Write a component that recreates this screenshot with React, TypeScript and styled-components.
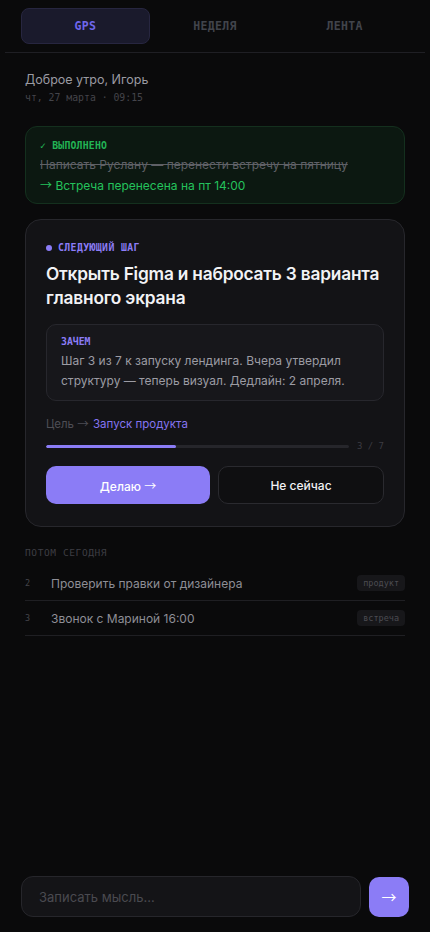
import styled, { createGlobalStyle } from "styled-components";
import { useState } from "react";

const GlobalStyle = createGlobalStyle`
  html, body {
    margin: 0;
    padding: 0;
    background: #0a0a0b;
  }
  * { box-sizing: border-box; }
`;

const tabs = ["GPS", "НЕДЕЛЯ", "ЛЕНТА"];

const later = [
  { n: 2, text: "Проверить правки от дизайнера", tag: "продукт" },
  { n: 3, text: "Звонок с Мариной 16:00", tag: "встреча" },
];

const App: React.FC = () => {
  const [active, setActive] = useState(0);
  const done = 3;
  const total = 7;

  return (
    <Page>
      <GlobalStyle />
      <Header>
        {tabs.map((t, i) => (
          <Tab key={t} $active={i === active} onClick={() => setActive(i)}>
            {t}
          </Tab>
        ))}
      </Header>

      <Content>
        <Greeting>
          <Hello>Доброе утро, Игорь</Hello>
          <DateLine>чт, 27 марта · 09:15</DateLine>
        </Greeting>

        <DoneCard>
          <DoneLabel>✓ ВЫПОЛНЕНО</DoneLabel>
          <DoneTask>Написать Руслану — перенести встречу на пятницу</DoneTask>
          <DoneResult>
            <Arrow>→</Arrow> Встреча перенесена на пт 14:00
          </DoneResult>
        </DoneCard>

        <StepCard>
          <StepLabel>
            <Dot />
            СЛЕДУЮЩИЙ ШАГ
          </StepLabel>
          <StepTitle>Открыть Figma и набросать 3 варианта главного экрана</StepTitle>
          <WhyBox>
            <WhyLabel>ЗАЧЕМ</WhyLabel>
            <WhyText>
              Шаг 3 из 7 к запуску лендинга. Вчера утвердил структуру — теперь
              визуал. Дедлайн: 2 апреля.
            </WhyText>
          </WhyBox>
          <Goal>
            Цель <Arrow>→</Arrow> <GoalLink>Запуск продукта</GoalLink>
          </Goal>
          <ProgressRow>
            <Track>
              <Fill style={{ width: `${(done / total) * 100}%` }} />
            </Track>
            <Count>
              {done} / {total}
            </Count>
          </ProgressRow>
          <Buttons>
            <PrimaryButton>
              Делаю <Arrow>→</Arrow>
            </PrimaryButton>
            <GhostButton>Не сейчас</GhostButton>
          </Buttons>
        </StepCard>

        <Section>
          <SectionTitle>ПОТОМ СЕГОДНЯ</SectionTitle>
          <List>
            {later.map((item) => (
              <Row key={item.n}>
                <Num>{item.n}</Num>
                <RowText>{item.text}</RowText>
                <Tag>{item.tag}</Tag>
              </Row>
            ))}
          </List>
        </Section>
      </Content>

      <Composer>
        <Input placeholder="Записать мысль..." />
        <SendButton>
          <Arrow>→</Arrow>
        </SendButton>
      </Composer>
    </Page>
  );
};

const Page = styled.div`
  display: flex;
  flex-direction: column;
  min-height: 100vh;
  background: #0a0a0b;
  font-family: Inter, "Noto Sans", sans-serif;
`;

const Arrow = styled.span`
  font-family: "Noto Sans CJK SC", sans-serif;
  font-weight: 400;
`;

const Header = styled.div`
  display: flex;
  gap: 1px;
  margin: 0 5px;
  padding: 8px 16px 8px;
  border-bottom: 1px solid #1f1f24;
`;

const Tab = styled.button<{ $active: boolean }>`
  flex: 1;
  height: 36px;
  border-radius: 8px;
  border: 1px solid ${(p) => (p.$active ? "#272640" : "transparent")};
  background: ${(p) => (p.$active ? "#1a1a2c" : "transparent")};
  color: ${(p) => (p.$active ? "#6f66ec" : "#41444b")};
  font-family: "DejaVu Sans Mono", monospace;
  font-size: 11.5px;
  font-weight: 700;
  letter-spacing: 0.3px;
  cursor: pointer;
`;

const Content = styled.div`
  display: flex;
  flex-direction: column;
  padding: 18px 25px 0;
`;

const Greeting = styled.div`
  display: flex;
  flex-direction: column;
  gap: 2px;
  margin-bottom: 22px;
`;

const Hello = styled.div`
  color: #9a9aa2;
  font-size: 12.5px;
  line-height: 18px;
`;

const DateLine = styled.div`
  color: #44444a;
  font-family: "DejaVu Sans Mono", monospace;
  font-size: 9.8px;
  line-height: 13px;
`;

const DoneCard = styled.div`
  display: flex;
  flex-direction: column;
  gap: 3px;
  padding: 12px 14px 9px;
  border-radius: 12px;
  border: 1px solid #14301e;
  background: #0c1811;
  margin-bottom: 15px;
`;

const DoneLabel = styled.div`
  color: #22b455;
  font-family: "DejaVu Sans Mono", monospace;
  font-size: 9.8px;
  font-weight: 700;
  letter-spacing: 0.2px;
  line-height: 14px;
`;

const DoneTask = styled.div`
  color: #5f6066;
  font-size: 12px;
  line-height: 17px;
  text-decoration: line-through;
`;

const DoneResult = styled.div`
  color: #24c25c;
  font-size: 12px;
  line-height: 17px;
`;

const StepCard = styled.div`
  display: flex;
  flex-direction: column;
  padding: 22px 20px 22px;
  border-radius: 16px;
  border: 1px solid #27272c;
  background: #131316;
`;

const StepLabel = styled.div`
  display: flex;
  align-items: center;
  gap: 6px;
  color: #8b7cf6;
  font-family: "DejaVu Sans Mono", monospace;
  font-size: 9.8px;
  font-weight: 700;
  letter-spacing: 0.4px;
  line-height: 12px;
`;

const Dot = styled.span`
  width: 6px;
  height: 6px;
  border-radius: 50%;
  background: #8b7cf6;
`;

const StepTitle = styled.div`
  margin-top: 8px;
  color: #f2f2f5;
  font-size: 17.3px;
  font-weight: 600;
  line-height: 24px;
  letter-spacing: -0.2px;
`;

const WhyBox = styled.div`
  display: flex;
  flex-direction: column;
  gap: 3px;
  margin-top: 14px;
  padding: 11px 14px 9px;
  border-radius: 10px;
  border: 1px solid #27272d;
  background: #17171b;
`;

const WhyLabel = styled.div`
  color: #8b7cf6;
  font-family: "DejaVu Sans Mono", monospace;
  font-size: 9.8px;
  font-weight: 700;
  line-height: 12px;
`;

const WhyText = styled.div`
  color: #9c9ca4;
  font-size: 12px;
  line-height: 20px;
`;

const Goal = styled.div`
  margin-top: 14px;
  color: #4e4e55;
  font-size: 11.5px;
  line-height: 16px;
`;

const GoalLink = styled.span`
  margin-left: 1px;
  color: #8474f0;
`;

const ProgressRow = styled.div`
  display: flex;
  align-items: center;
  gap: 8px;
  margin-top: 9px;
`;

const Track = styled.div`
  flex: 1;
  height: 3px;
  border-radius: 2px;
  background: #26262b;
  overflow: hidden;
`;

const Fill = styled.div`
  height: 100%;
  border-radius: 2px;
  background: #8b7cf6;
`;

const Count = styled.div`
  color: #3c3c42;
  font-family: "DejaVu Sans Mono", monospace;
  font-size: 9px;
  white-space: pre;
`;

const Buttons = styled.div`
  display: flex;
  gap: 8px;
  margin-top: 15px;
`;

const PrimaryButton = styled.button`
  flex: 1;
  height: 38px;
  border: none;
  border-radius: 10px;
  background: #8b7cf6;
  color: #ffffff;
  font-family: Inter, sans-serif;
  font-size: 12px;
  font-weight: 500;
  cursor: pointer;
`;

const GhostButton = styled.button`
  flex: 1;
  height: 38px;
  border-radius: 10px;
  border: 1px solid #2a2a2f;
  background: #0f0f11;
  color: #f2f2f5;
  font-family: Inter, sans-serif;
  font-size: 12px;
  font-weight: 500;
  cursor: pointer;
`;

const Section = styled.div`
  display: flex;
  flex-direction: column;
  margin-top: 20px;
`;

const SectionTitle = styled.div`
  color: #3e3e44;
  font-family: "DejaVu Sans Mono", monospace;
  font-size: 9.5px;
  letter-spacing: 0.6px;
  line-height: 12px;
  margin-bottom: 7px;
`;

const List = styled.div`
  display: flex;
  flex-direction: column;
`;

const Row = styled.div`
  display: flex;
  align-items: center;
  height: 35px;
  border-bottom: 1px solid #1f1f23;
`;

const Num = styled.span`
  width: 26px;
  color: #44444a;
  font-family: "DejaVu Sans Mono", monospace;
  font-size: 8.5px;
`;

const RowText = styled.span`
  flex: 1;
  color: #8e8e96;
  font-size: 12px;
`;

const Tag = styled.span`
  padding: 3px 6px;
  border-radius: 4px;
  background: #17171a;
  color: #4c4c52;
  font-family: "DejaVu Sans Mono", monospace;
  font-size: 8.5px;
`;

const Composer = styled.div`
  display: flex;
  align-items: center;
  gap: 8px;
  margin-top: auto;
  padding: 0 21px 15px;
`;

const Input = styled.input`
  flex: 1;
  height: 41px;
  padding: 0 17px;
  border-radius: 12px;
  border: 1px solid #26262b;
  background: #141417;
  color: #e0e0e5;
  font-family: Inter, sans-serif;
  font-size: 13px;
  outline: none;
  &::placeholder {
    color: #4a4a50;
  }
`;

const SendButton = styled.button`
  width: 40px;
  height: 40px;
  border: none;
  border-radius: 10px;
  background: #8b7cf6;
  color: #ffffff;
  font-size: 15px;
  cursor: pointer;
`;

export default App;
